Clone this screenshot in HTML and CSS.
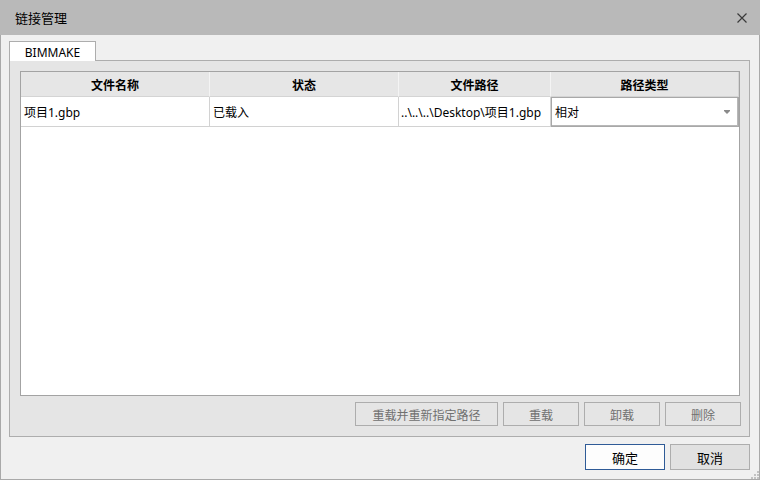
FILE: index.html
```html
<!DOCTYPE html>
<html lang="zh-CN">
<head>
<meta charset="utf-8">
<title>链接管理</title>
<link rel="stylesheet" href="styles.css">
</head>
<body>
<div class="window">
  <div class="titlebar">
    <span class="title">链接管理</span>
    <svg class="close" width="10" height="10" viewBox="0 0 10 10"><path d="M0.5 0.5 L9.5 9.5 M9.5 0.5 L0.5 9.5" stroke="#3a3a3a" stroke-width="1.2" fill="none"/></svg>
  </div>
  <div class="body">
    <div class="tabs"><div class="tab">BIMMAKE</div></div>
    <div class="panel">
      <div class="grid">
        <div class="row head">
          <div class="cell c1">文件名称</div>
          <div class="cell c2">状态</div>
          <div class="cell c3">文件路径</div>
          <div class="cell c4">路径类型</div>
        </div>
        <div class="row data">
          <div class="cell c1">项目1.gbp</div>
          <div class="cell c2">已载入</div>
          <div class="cell c3">..\..\..\Desktop\项目1.gbp</div>
          <div class="cell c4 combo"><span>相对</span>
            <svg class="arrow" width="6" height="4" viewBox="0 0 6 4"><path d="M0 0 H6 V1 L3 4 L0 1 Z" fill="#8a8a8a"/></svg>
          </div>
        </div>
      </div>
      <div class="actions">
        <button class="btn dis wide">重载并重新指定路径</button>
        <button class="btn dis">重载</button>
        <button class="btn dis">卸载</button>
        <button class="btn dis">删除</button>
      </div>
    </div>
    <div class="footer">
      <button class="fbtn primary">确定</button>
      <button class="fbtn">取消</button>
    </div>
    <svg class="grip" width="8" height="8" viewBox="0 0 8 8"><g fill="#c2c2c2"><rect x="6" y="0" width="2" height="2"/><rect x="3" y="3" width="2" height="2"/><rect x="6" y="3" width="2" height="2"/><rect x="0" y="6" width="2" height="2"/><rect x="3" y="6" width="2" height="2"/><rect x="6" y="6" width="2" height="2"/></g></svg>
  </div>
</div>
</body>
</html>
```

FILE: styles.css
```css
* { box-sizing: border-box; }
html, body { margin: 0; padding: 0; }
body {
  width: 760px;
  height: 480px;
  overflow: hidden;
  font-family: "Noto Sans", "Noto Sans CJK SC", sans-serif;
  font-size: 12px;
  color: #000;
  background: #f0f0f0;
}
.window {
  width: 760px;
  height: 480px;
  display: flex;
  flex-direction: column;
}
.titlebar {
  height: 35px;
  background: #b9b9b9;
  display: flex;
  align-items: center;
  justify-content: space-between;
  padding: 0 13px 0 15px;
}
.title {
  font-family: "Noto Sans CJK SC", sans-serif;
  font-size: 13px;
  color: #000;
}
.close { display: block; margin-top: 1px; }
.body {
  position: relative;
  flex: 1;
  background: #f0f0f0;
  border: 1px solid #a9a9a9;
  border-top: none;
  padding: 6px 9px 0 8px;
  display: flex;
  flex-direction: column;
}
.tabs {
  display: flex;
  height: 20px;
  position: relative;
  z-index: 1;
  margin-bottom: -1px;
}
.tab {
  width: 87px;
  height: 20px;
  background: #ffffff;
  border: 1px solid #adadad;
  border-bottom: none;
  display: flex;
  align-items: center;
  justify-content: center;
  font-size: 12px;
  color: #000;
  padding-top: 1px;
}
.panel {
  height: 377px;
  background: #e5e5e5;
  border: 1px solid #adadad;
  padding: 10px 9px 0 10px;
  display: flex;
  flex-direction: column;
}
.grid {
  height: 325px;
  background: #ffffff;
  border: 1px solid #a3a3a3;
}
.row { display: flex; }
.cell {
  border-right: 1px solid #d2d2d2;
  border-bottom: 1px solid #d2d2d2;
  display: flex;
  align-items: center;
  white-space: nowrap;
  overflow: hidden;
}
.c1 { width: 189px; }
.c2 { width: 189px; }
.c3 { width: 152px; }
.c4 { width: 188px; border-right: none; }
.head .cell {
  height: 25px;
  background: #e6e6e6;
  font-weight: bold;
  justify-content: center;
  font-family: "Noto Sans CJK SC", sans-serif;
  border-right-color: #f4f4f4;
  border-bottom-color: #d4d4d4;
}
.head .c4 { border-right: 1px solid #d4d4d4; }
.data .cell {
  height: 30px;
  padding-left: 3px;
}
.data .c3 { padding-left: 2px; }
.data .combo {
  border: 1px solid #a8a8a8;
  box-shadow: inset -1px -1px 0 #b8b8b8;
  justify-content: space-between;
  padding: 0 8px 0 3px;
}
.arrow { display: block; }
.actions {
  display: flex;
  justify-content: flex-end;
  gap: 5px;
  margin-top: 6px;
  margin-right: -1px;
}
.btn {
  height: 24px;
  width: 76px;
  background: #e5e5e5;
  border: 1px solid #adadad;
  font-family: "Noto Sans CJK SC", sans-serif;
  font-size: 12px;
  color: #707070;
  padding: 0;
}
.btn.wide { width: 143px; }
.footer {
  display: flex;
  justify-content: flex-end;
  gap: 5px;
  margin-top: 7px;
}
.fbtn {
  width: 80px;
  height: 26px;
  background: #e1e1e1;
  border: 1px solid #adadad;
  font-family: "Noto Sans CJK SC", sans-serif;
  font-size: 13px;
  color: #000;
  padding: 0;
}
.fbtn.primary {
  background: #fdfdfd;
  border: 1px solid #2f5b97;
}
.grip {
  position: absolute;
  right: 0;
  bottom: 0;
}
```
